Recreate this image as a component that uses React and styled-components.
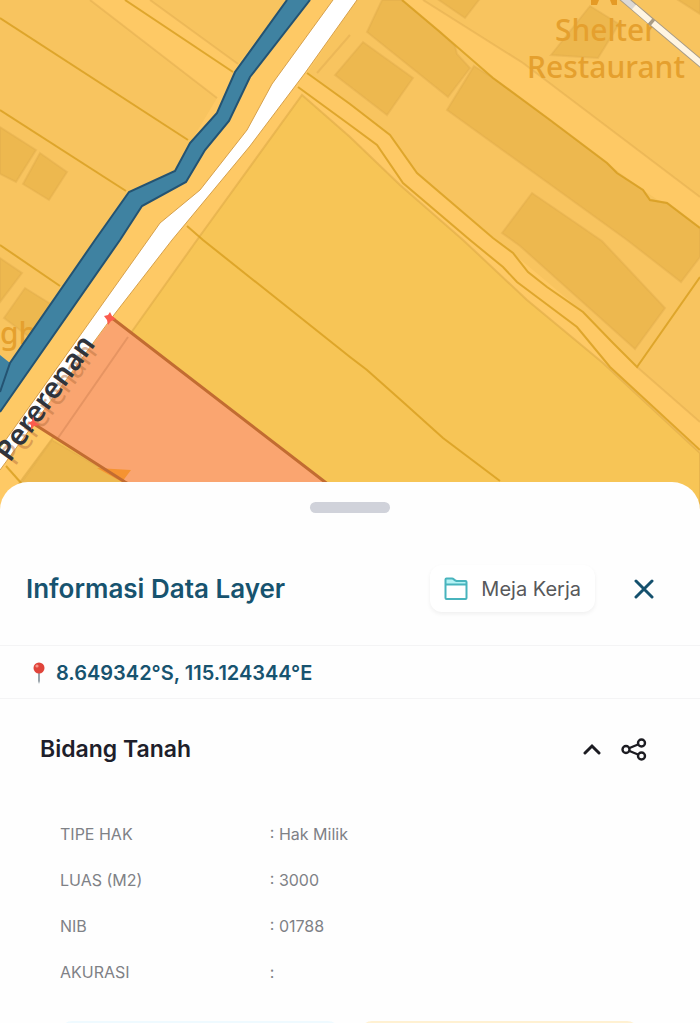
import React, { useState } from "react";
import styled, { createGlobalStyle } from "styled-components";

const details = [
  { label: "TIPE HAK", value: "Hak Milik" },
  { label: "LUAS (M2)", value: "3000" },
  { label: "NIB", value: "01788" },
  { label: "AKURASI", value: "" },
];

// shapes of the map, in viewBox units
const buildings = [
  "382,0 402,0 440,32 455,46 457,54 470,68 448,97 367,32",
  "363,42 413,78 387,115 335,75",
  "474,66 493,78 550,120 607,163 617,173 643,190 650,200 667,203 700,228 700,257 681,282 627,240 447,110",
  "532,193 573,221 602,241 665,308 635,349 520,246 502,233",
  "433,-4 482,-4 465,18",
  "590,6 619,24 598,58 551,55",
  "672,-4 700,-4 700,14",
  "0,127 36,150 16,182 0,174",
  "40,153 67,172 49,200 23,184",
  "0,258 22,273 0,302",
  "25,288 54,306 36,342 4,318",
  "52,440 125,482 125,512 0,512",
];

const faintLines = [
  "90,0 217,98",
  "150,0 238,64",
  "350,35 317,73",
  "423,0 523,63 700,197",
  "637,367 700,422",
];

const boundaries = [
  "125,0 233,72",
  "0,18 188,140",
  "0,110 126,191",
  "0,245 60,286",
  "187,226 203,240 350,357 367,370 403,402 443,438 500,481",
  "402,0 440,32 493,78 550,120 607,163 617,173 643,190 650,200 667,203 700,228",
  "307,73 350,104 390,135 417,173 493,238 513,253 528,272 547,287 583,312 613,343 637,367 700,277",
  "298,87 350,125 377,145 403,183 470,240 503,267 517,282 537,297 577,327 610,367 700,450",
  "6,466 22,484",
];

const roadEdge =
  "333,0 272,84 247,130 200,190 160,223 148,240 0,448";
const roadEdgeRight = "0,470 110,320 172,240 250,146 305,73 357,0";

const MapView = () => (
  <MapDrawing
    viewBox="0 0 700 512"
    preserveAspectRatio="xMidYMin slice"
    role="img"
    aria-label="Peta bidang tanah"
  >
    <rect width="700" height="512" fill="#fec965" />

    <g fill="#f8c45f">
      <polygon points="0,0 90,0 217,98 190,143 175,171 129,192 0,385" />
      <polygon points="150,0 287,0 238,64" />
      <polygon points="357,0 402,0 493,78 607,163 643,190 700,228 700,277 637,367 583,312 417,173 390,135 307,73" />
      <polygon points="423,0 700,0 700,197 523,63" />
      <polygon points="637,367 700,277 700,422" />
    </g>
    <polygon
      points="302,95 350,137 400,185 463,240 527,300 603,363 700,453 700,512 0,512 23,478 133,330 197,240"
      fill="#f7c556"
      stroke="#d9a544"
      strokeOpacity="0.5"
      strokeWidth="2"
    />

    {buildings.map((points) => (
      <polygon
        key={points}
        points={points}
        fill="#edb84f"
        stroke="#dfaa4c"
        strokeOpacity="0.4"
        strokeWidth="2"
      />
    ))}
    <g fill="none" stroke="#d9a54a" strokeOpacity="0.4" strokeWidth="2">
      {faintLines.map((points) => (
        <polyline key={points} points={points} />
      ))}
    </g>
    <g fill="none" stroke="#d79d1e" strokeOpacity="0.8" strokeWidth="2">
      {boundaries.map((points) => (
        <polyline key={points} points={points} />
      ))}
    </g>

    <PlaceName x="606" y="41" textAnchor="middle">
      Shelter
    </PlaceName>
    <PlaceName x="606" y="78" textAnchor="middle">
      Restaurant
    </PlaceName>
    <path d="M591 0h8l-2 5h-6zM610 0h7v5h-5z" fill="#e59a25" />

    <path d="M622 -3L704 66" stroke="#a99c86" strokeWidth="8" />
    <path d="M622 -3L650 21" stroke="#dcd9d6" strokeWidth="6" />
    <path d="M634 7L650 21M653 23L704 66" stroke="#fff5e2" strokeWidth="6" />

    <PlaceName x="0" y="344">
      ght
    </PlaceName>
    <polygon
      points="287,0 235,72 217,113 190,143 175,171 129,192 95,240 10,363 0,355 0,412 120,240 142,206 186,182 205,150 229,121 250,77 310,0"
      fill="#3f82a1"
    />
    <g fill="none" stroke="#245372" strokeWidth="2">
      <polyline points="287,0 235,72 217,113 190,143 175,171 129,192 95,240 10,363 0,392" />
      <polyline points="310,0 250,77 229,121 205,150 186,182 142,206 120,240 0,412" />
    </g>

    <polygon points={`${roadEdge} ${roadEdgeRight}`} fill="#fff" />
    <g fill="none" stroke="#d6a04b" strokeWidth="1">
      <polyline points={roadEdge} />
      <polyline points={roadEdgeRight} />
    </g>

    <polygon points="112,318 325,482 364,512 180,512 125,482 34,424" fill="#faa570" />
    <path d="M128 337L58 438" stroke="#d98958" strokeOpacity="0.6" strokeWidth="2" />
    <path d="M97 468L131 470L122 482Z" fill="#f59331" />
    <path
      d="M112 318L325 482L364 512M34 424L125 482L180 512"
      fill="none"
      stroke="#c26c31"
      strokeWidth="3"
    />

    <StreetName transform="translate(15 467) rotate(-54)" $ghost>
      Pererenan
    </StreetName>
    <StreetName transform="translate(10 463) rotate(-54)">Pererenan</StreetName>

    <g fill="#fb5b4d">
      <path d="M104 316L108 315L110 312L112 316L116 319L111 321L108 325L107 320Z" />
      <path d="M28 423L32 421L33 416L35 422L40 425L34 426L31 430L31 425Z" />
    </g>
  </MapDrawing>
);

const PinIcon = () => (
  <svg width="14" height="22" viewBox="0 0 14 22" aria-hidden="true">
    <path d="M6 10h2v9l-1 3l-1-3z" fill="#9aa4ab" />
    <circle cx="7" cy="6" r="5.5" fill="#e0443a" />
    <circle cx="5" cy="4" r="1.6" fill="#f4958a" />
  </svg>
);

const FolderIcon = () => (
  <svg width="24" height="24" viewBox="0 0 24 24" aria-hidden="true">
    <path d="M1.5 7V2.5Q1.5 1.5 2.5 1.5H8Q9 1.5 10 2.5T12.5 4H21.5Q22.5 4 22.5 5V7Z" fill="#b4f3f5" />
    <path
      d="M1.5 2.5Q1.5 1.5 2.5 1.5H8Q9 1.5 10 2.5T12.5 4H21.5Q22.5 4 22.5 5V21Q22.5 22 21.5 22H2.5Q1.5 22 1.5 21ZM1.5 7.5H22.5"
      fill="none"
      stroke="#48b4bd"
      strokeWidth="2"
    />
  </svg>
);

const CloseIcon = () => (
  <svg width="20" height="20" viewBox="0 0 20 20" aria-hidden="true">
    <path d="M2 2L18 18M18 2L2 18" stroke="#14506d" strokeWidth="3" strokeLinecap="round" />
  </svg>
);

const ChevronIcon = ({ open }) => (
  <svg width="18" height="12" viewBox="0 0 18 12" aria-hidden="true">
    <path
      d={open ? "M2 10L9 3L16 10" : "M2 3L9 10L16 3"}
      fill="none"
      stroke="#1c1c22"
      strokeWidth="3"
      strokeLinecap="round"
    />
  </svg>
);

const ShareIcon = () => (
  <svg width="26" height="24" viewBox="0 0 26 24" aria-hidden="true">
    <g fill="none" stroke="#1c1c22" strokeWidth="2.4">
      <circle cx="5" cy="12.5" r="3.5" />
      <circle cx="20.5" cy="6" r="3.5" />
      <circle cx="20.5" cy="19" r="3.5" />
      <path d="M8.5 11L17 7.5M8.5 14L17 17.5" />
    </g>
  </svg>
);

const App = () => {
  const [open, setOpen] = useState(true);

  return (
    <>
      <GlobalStyle />
      <Page>
        <MapArea>
          <MapView />
        </MapArea>
        <Sheet>
          <Handle />
          <Header>
            <Title>Informasi Data Layer</Title>
            <WorkspaceButton type="button">
              <FolderIcon />
              Meja Kerja
            </WorkspaceButton>
            <IconButton type="button" aria-label="Tutup">
              <CloseIcon />
            </IconButton>
          </Header>
          <Coordinates>
            <PinIcon />
            8.649342°S, 115.124344°E
          </Coordinates>
          <Section>
            <SectionHeader>
              <SectionTitle>Bidang Tanah</SectionTitle>
              <IconButton
                type="button"
                aria-label="Bidang Tanah"
                aria-expanded={open}
                onClick={() => setOpen(!open)}
              >
                <ChevronIcon open={open} />
              </IconButton>
              <IconButton type="button" aria-label="Bagikan">
                <ShareIcon />
              </IconButton>
            </SectionHeader>
            {open && (
              <Details>
                {details.map(({ label, value }) => (
                  <DetailRow key={label}>
                    <dt>{label}</dt>
                    <dd>: {value}</dd>
                  </DetailRow>
                ))}
              </Details>
            )}
            <Actions>
              <ActionButton type="button" aria-label="Detail" $color="#effaff" />
              <ActionButton type="button" aria-label="Simpan" $color="#fff1d2" />
            </Actions>
          </Section>
        </Sheet>
      </Page>
    </>
  );
};

const GlobalStyle = createGlobalStyle`
  * {
    box-sizing: border-box;
  }

  body {
    margin: 0;
    background: #fefefe;
    font-family: Inter, "Liberation Sans", sans-serif;
  }

  button {
    font-family: inherit;
  }
`;

const Page = styled.main`
  display: flex;
  flex-direction: column;
  height: 100vh;
  overflow: hidden;
`;

const MapArea = styled.section`
  flex: 0 0 50vh;
  min-height: 512px;
  background: #fec965;
`;

const MapDrawing = styled.svg`
  display: block;
  width: 100%;
  height: 100%;
`;

const PlaceName = styled.text`
  font-family: "Noto Sans", sans-serif;
  font-size: 30px;
  font-weight: 500;
  fill: #e5a02e;
`;

const StreetName = styled.text`
  font-family: "Noto Sans", sans-serif;
  font-size: 29px;
  font-weight: ${({ $ghost }) => ($ghost ? 400 : 600)};
  fill: ${({ $ghost }) => ($ghost ? "#b9713e" : "#30343c")};
  fill-opacity: ${({ $ghost }) => ($ghost ? 0.5 : 1)};
`;

const Sheet = styled.section`
  position: relative;
  flex: 1 0 auto;
  display: flex;
  flex-direction: column;
  margin-top: -30px;
  border-radius: 28px 28px 0 0;
  background: #fefefe;
`;

const Handle = styled.div`
  align-self: center;
  width: 80px;
  height: 11px;
  margin-top: 20px;
  border-radius: 6px;
  background: #d0d2da;
`;

const Header = styled.header`
  display: flex;
  align-items: center;
  padding: 52px 45px 33px 26px;
  border-bottom: 1px solid #f4f4f5;
`;

const Title = styled.h1`
  flex: 1;
  margin: 0;
  font-size: 26px;
  font-weight: 600;
  line-height: 32px;
  color: #17536f;
`;

const WorkspaceButton = styled.button`
  display: flex;
  align-items: center;
  gap: 13px;
  height: 47px;
  margin-right: 38px;
  padding: 0 14px;
  border: 0;
  border-radius: 12px;
  background: #fff;
  box-shadow: 0 2px 4px rgba(0, 0, 0, 0.06);
  font-size: 20px;
  color: #58595b;
`;

const IconButton = styled.button`
  display: flex;
  align-items: center;
  justify-content: center;
  min-width: 22px;
  padding: 0;
  border: 0;
  background: none;
`;

const Coordinates = styled.p`
  display: flex;
  align-items: center;
  gap: 10px;
  height: 53px;
  margin: 0;
  padding: 2px 32px 0;
  border-bottom: 1px solid #f4f4f5;
  font-size: 20px;
  font-weight: 600;
  color: #17536f;
`;

const Section = styled.section`
  padding: 34px 53px 0 40px;
`;

const SectionHeader = styled.div`
  display: flex;
  align-items: center;
  gap: 18px;
`;

const SectionTitle = styled.h2`
  flex: 1;
  margin: 0;
  font-size: 23px;
  font-weight: 600;
  line-height: 32px;
  color: #1e1f2b;
`;

const Details = styled.dl`
  display: grid;
  gap: 22px;
  margin: 57px 20px 0;
`;

const DetailRow = styled.div`
  display: grid;
  grid-template-columns: 37% 1fr;
  font-size: 16px;
  line-height: 24px;
  color: #7f8186;

  dt,
  dd {
    margin: 0;
  }
`;

const Actions = styled.div`
  display: grid;
  grid-template-columns: 1fr 1fr;
  gap: 20px;
  margin: 37px 8px 0 20px;
`;

const ActionButton = styled.button`
  height: 56px;
  border: 0;
  border-radius: 12px;
  background: ${({ $color }) => $color};
`;

export default App;
